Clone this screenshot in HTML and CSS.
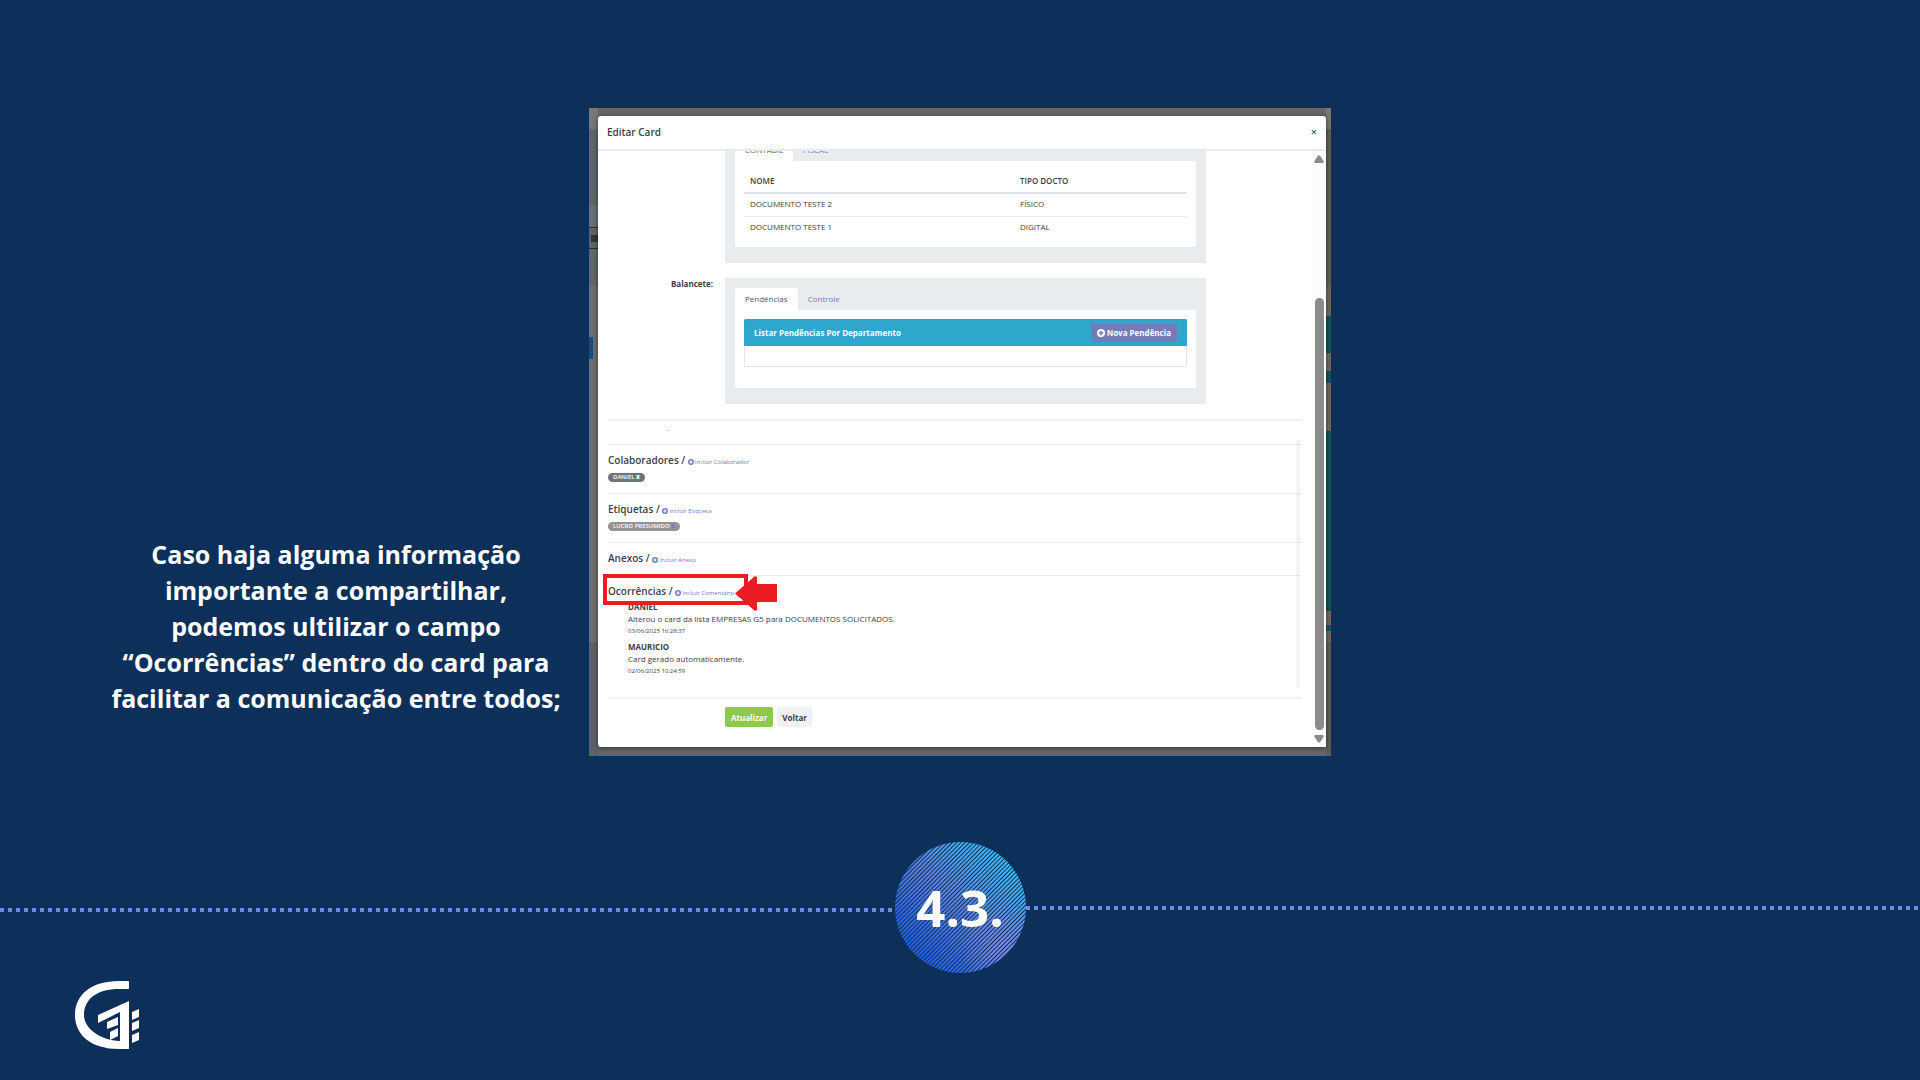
FILE: index.html
```html
<!DOCTYPE html>
<html lang="pt-BR">
<head>
<meta charset="utf-8">
<title>Editar Card – Passo 4.3</title>
<link rel="stylesheet" href="styles.css">
</head>
<body>
<svg class="defs" aria-hidden="true">
  <symbol id="plus" viewBox="0 0 16 16">
    <path fill="currentColor" fill-rule="evenodd" d="M8 0a8 8 0 1 0 0 16A8 8 0 0 0 8 0zM6.500 3.500h3v3h3v3h-3v3h-3v-3h-3v-3h3z"/>
  </symbol>
</svg>
<main class="slide">
  <section class="stage">
    <p class="caption">Caso haja alguma informação importante a compartilhar, podemos ultilizar o campo “Ocorrências” dentro do card para facilitar a comunicação entre todos;</p>
    <div class="frame">
      <div class="strip strip-left"></div>
      <div class="strip strip-right"></div>
      <div class="modal" role="dialog" aria-labelledby="title">
        <header class="modal-head">
          <h1 id="title">Editar Card</h1>
          <button class="close" type="button" aria-label="Fechar">×</button>
        </header>
        <div class="modal-body">
          <div class="content">
            <div class="field field-first">
              <div class="label"></div>
              <div class="panel">
                <nav class="tabs"><a class="tab active" href="#contabil">CONTÁBIL</a><a class="tab" href="#fiscal">FISCAL</a></nav>
                <div class="pane pane-table">
                  <table>
                    <thead><tr><th>NOME</th><th>TIPO DOCTO</th></tr></thead>
                    <tbody>
                      <tr><td>DOCUMENTO TESTE 2</td><td>FÍSICO</td></tr>
                      <tr><td>DOCUMENTO TESTE 1</td><td>DIGITAL</td></tr>
                    </tbody>
                  </table>
                </div>
              </div>
            </div>
            <div class="field">
              <div class="label">Balancete:</div>
              <div class="panel">
                <nav class="tabs"><a class="tab active" href="#pendencias">Pendências</a><a class="tab" href="#controle">Controle</a></nav>
                <div class="pane pane-list">
                  <div class="portlet">
                    <div class="portlet-head"><h2>Listar Pendências Por Departamento</h2>
                      <button class="new" type="button"><svg class="ico ico-l"><use href="#plus"/></svg>Nova Pendência</button></div>
                    <div class="portlet-body"></div>
                  </div>
                </div>
              </div>
            </div>
            <div class="minor"><a href="#mais">-</a></div>
            <div class="sections">
              <section class="sec sec-tags">
                <h3>Colaboradores / <a href="#colaborador"><svg class="ico"><use href="#plus"/></svg>Incluir Colaborador</a></h3>
                <span class="pill">DANIEL <b>x</b></span>
              </section>
              <section class="sec sec-tags">
                <h3>Etiquetas / <a href="#etiqueta"><svg class="ico"><use href="#plus"/></svg>Incluir Etiqueta</a></h3>
                <span class="pill pill-gray">LUCRO PRESUMIDO <b>x</b></span>
              </section>
              <section class="sec sec-files">
                <h3>Anexos / <a href="#anexo"><svg class="ico"><use href="#plus"/></svg>Incluir Anexo</a></h3>
              </section>
              <section class="sec sec-log">
                <h3>Ocorrências / <a href="#comentario"><svg class="ico"><use href="#plus"/></svg>Incluir Comentário</a></h3>
                <div class="entry"><strong>DANIEL</strong><p>Alterou o card da lista EMPRESAS G5 para DOCUMENTOS SOLICITADOS.</p><time>03/06/2025 16:28:37</time></div>
                <div class="entry"><strong>MAURICIO</strong><p>Card gerado automaticamente.</p><time>02/06/2025 10:24:59</time></div>
                <div class="highlight"></div>
                <svg class="arrow" viewBox="0 0 42 35"><path fill="#ed1c24" d="M0 17.500L20 0l2 1v7h20v18H22v8l-2 1z"/></svg>
              </section>
            </div>
            <footer class="actions"><button class="save" type="button">Atualizar</button><button class="back" type="button">Voltar</button></footer>
          </div>
          <div class="scroll" aria-hidden="true">
            <svg class="tri" viewBox="0 0 10 8"><path fill="#8b8b8b" d="M4 .5h2L10 7 9 8H1L0 7z"/></svg>
            <div class="thumb"></div>
            <svg class="tri" viewBox="0 0 10 8"><path fill="#8b8b8b" d="M4 7.500h2L10 1 9 0H1L0 1z"/></svg>
          </div>
        </div>
      </div>
    </div>
  </section>
  <section class="timeline">
    <div class="dots dots-left"></div>
    <div class="step">4.3.</div>
    <div class="dots dots-right"></div>
  </section>
  <svg class="logo" viewBox="0 0 66 70" role="img" aria-label="Logo">
    <g fill="#fff">
      <path d="M54 0v8H44C22 8 9 18 9 34c0 13 15 25 36 26V31L23 42v-8l31-14v48H44C16 68 0 54 0 34S16 0 44 0z"/>
      <path d="M43 36v8l-11 4v-7l11-5zM43 47v8l-8 4v-8zM57 31l7-3v8l-7 3zM57 42l7-3v8l-7 3zM57 54l7-3v8l-7 3z"/>
    </g>
  </svg>
</main>
</body>
</html>
```
FILE: styles.css
```css
* { box-sizing: border-box; }
body { margin: 0; background: #0d305a; font-family: "Open Sans", sans-serif; color: #3f4047; }
h1, h2, h3, p { margin: 0; font-weight: 600; }
a { color: #7479c4; text-decoration: none; }
button { font-family: inherit; border: 0; padding: 0; cursor: pointer; }
.defs { display: none; }
.slide { min-height: 100vh; padding-top: 108px; overflow: hidden; }

.stage { display: grid; grid-template-columns: 1fr 742px 1fr; }
.caption { align-self: end; justify-self: end; width: 456px; margin: 0 25px 40px 0; color: #fff; font-size: 25px; line-height: 36px; font-weight: 700; text-align: center; }

.frame { position: relative; background: #65676a; padding: 8px 5px 9px 9px; }
/* the dimmed page that shows on both sides of the dialog */
.strip { position: absolute; top: 0; bottom: 0; }
.strip-left { left: 0; width: 9px;
  background: linear-gradient(#184a77, #184a77) 0 229px / 4px 22px no-repeat,
    linear-gradient(#333436, #333436) 2px 127px / 7px 7px no-repeat,
    linear-gradient(#777 21px, #5f6668 21px 97px, #6a6f71 97px 119px, #2c2e30 119px 120px, #5f6466 120px 140px, #2c2e30 140px 141px, #61666a 141px 178px, #706e6c 178px 534px, #5e6165 534px); }
.strip-right { right: 0; width: 5px;
  background: linear-gradient(#777 21px, #5f5f60 21px 178px, #6b6866 178px 208px, #17515c 208px 245px, #6b6866 245px 263px, #17515c 263px 275px, #6b6866 275px 323px, #17515c 323px 503px, #6b6866 503px 517px, #17515c 517px 523px, #6b6866 523px 534px, #5a5c60 534px); }

.modal { position: relative; background: #fff; border-radius: 3px; box-shadow: 0 1px 5px #0008; }
.modal-head { display: flex; align-items: center; justify-content: space-between; height: 35px; padding: 0 9px 2px; border-bottom: 2px solid #e7ebef; }
.modal-head h1 { font-size: 10px; }
.close { background: none; color: #555; font-size: 11px; font-weight: 600; }
.modal-body { display: flex; justify-content: space-between; overflow: hidden; }
.content { flex: 1; padding-left: 10px; margin-right: 10px; font-size: 8px; }
.scroll { display: flex; flex-direction: column; align-items: center; gap: 5px; width: 14px; padding: 4px 0; background: #fcfcfc; }
.tri { width: 10px; height: 8px; }
.thumb { width: 9px; height: 432px; margin-top: auto; border-radius: 5px; background: #8b8b8b; }

.field { display: grid; grid-template-columns: 105px 481px; column-gap: 12px; margin-bottom: 15px; }
.field-first { margin-top: -22px; }
.label { line-height: 12px; font-weight: 700; text-align: right; }
.panel { background: #e8ecef; padding: 10px 10px 16px; }
.tabs { display: flex; }
.tab { height: 22px; line-height: 22px; padding: 0 10px; border-radius: 2px 2px 0 0; }
.tab.active { background: #fff; color: #575962; }
.pane { background: #fff; border-radius: 0 0 2px 2px; padding: 9px; }
.pane-table { height: 86px; }
.pane-list { height: 78px; }
table { width: 100%; border-collapse: collapse; table-layout: fixed; }
th, td { padding: 0 6px 2px; height: 23px; text-align: left; font-weight: 400; }
th { font-weight: 600; border-bottom: 2px solid #dde3ea; }
th:first-child { width: 270px; }
tbody tr + tr td { border-top: 1px solid #e8ebef; }
.portlet { border: 1px solid #e2e5ec; border-top: 0; }
.portlet-head { display: flex; align-items: center; justify-content: space-between; height: 27px; margin: 0 -1px; padding: 0 10px; border-radius: 2px 2px 0 0; background: #2fa6cb; color: #fff; }
.portlet-head h2 { font-size: 8px; font-weight: 700; }
.new { display: flex; align-items: center; gap: 2px; height: 18px; padding: 0 6px; border-radius: 2px; background: #737bb8; color: #fff; font-size: 8px; font-weight: 700; }
.portlet-body { height: 20px; }
.ico { width: 6px; height: 6px; margin-right: 1px; vertical-align: -1px; }
.ico-l { width: 8px; height: 8px; margin: 0; }

.minor { height: 25px; border-top: 2px solid #f2f2f3; padding-left: 59px; line-height: 16px; }
.sections { position: relative; }
.sections::after { content: ""; position: absolute; top: -4px; bottom: 10px; right: 2px; width: 4px; background: #0000000a; }
.sec { border-top: 1px solid #ededf0; padding-top: 7px; }
.sec h3 { font-size: 10px; line-height: 16px; }
.sec h3 a { font-size: 6px; font-weight: 400; }
.sec-tags { height: 49px; }
.sec-files { height: 33px; }
.sec-log { position: relative; height: 122px; }
.pill { display: block; width: fit-content; height: 9px; margin-top: 3px; padding: 0 5px; border-radius: 5px; background: #6c757d; color: #fff; font-size: 6px; line-height: 8px; font-weight: 600; }
.pill-gray { background: #949494; }
.pill-gray b { color: #7479c4; }
.entry { padding-left: 20px; margin-bottom: 4px; line-height: 12px; }
.entry strong, .entry p, .entry time { display: block; }
.entry p { font-weight: 400; }
.entry time { font-size: 6px; }
.highlight { position: absolute; left: -5px; top: -2px; width: 145px; height: 31px; border: 4px solid #ed1c24; }
.arrow { position: absolute; left: 127px; top: 0; width: 42px; height: 35px; }
.actions { display: flex; gap: 4px; height: 50px; padding: 8px 0 0 117px; border-top: 2px solid #f2f2f3; }
.actions button { height: 20px; border-radius: 2px; font-size: 8px; font-weight: 700; }
.save { padding: 0 6px; background: #8fc94b; color: #fff; }
.actions .back { padding: 0 5px; background: #f1f2f5; color: #3f4047; }

.timeline { display: grid; grid-template-columns: 1fr 131px 1fr; align-items: center; margin-top: 86px; }
.dots { height: 4px; background: repeating-linear-gradient(90deg, #6c8cec 0 4px, transparent 4px 8px); }
.dots-left { margin: 4px 3px 0 0; }
.step { height: 131px; border-radius: 50%; color: #fff; font-size: 51px; line-height: 131px; font-weight: 700; text-align: center;
  background: repeating-linear-gradient(135deg, transparent 0 1px, #0d305a 2px, transparent 3px),
    radial-gradient(circle at 84% 80%, #7f8be8 0, #7f8be800 30%),
    linear-gradient(45deg, #1f5fe8 15%, #5f80dc 50%, #3dbcf5 85%); }
.logo { display: block; width: 66px; height: 70px; margin: 8px 0 0 75px; }
```
